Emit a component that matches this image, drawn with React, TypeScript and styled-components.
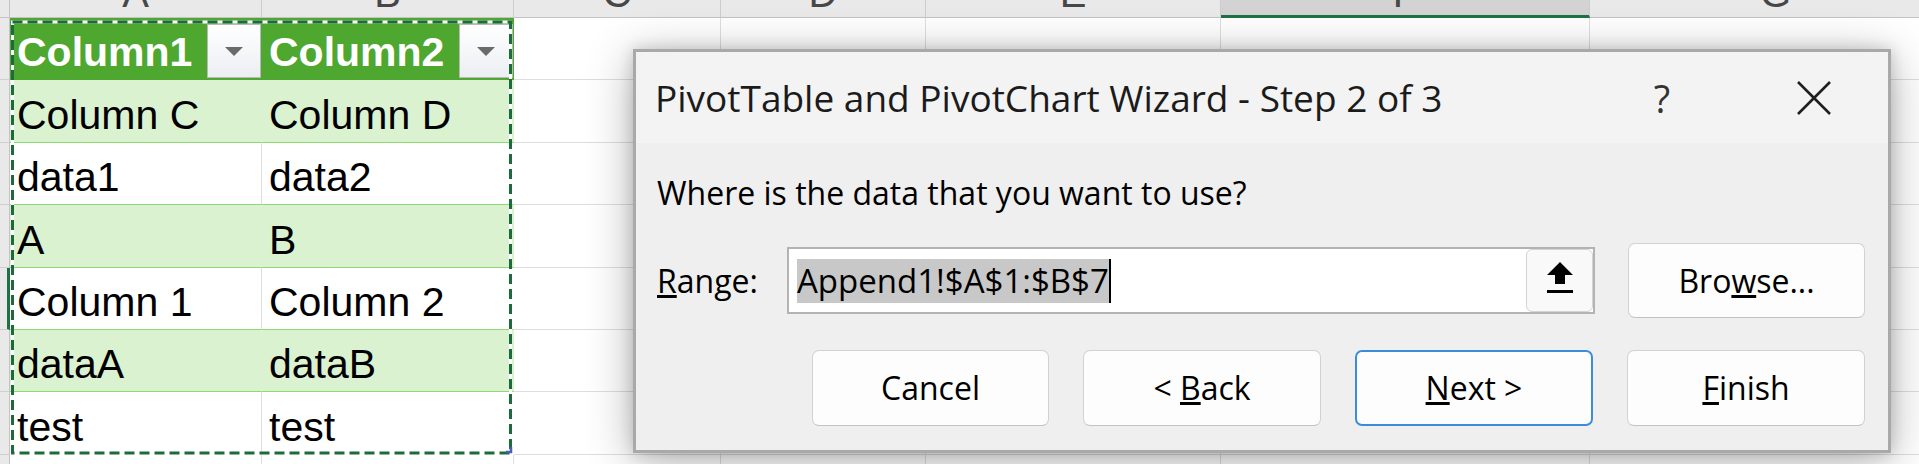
import React from 'react'
import styled, { createGlobalStyle } from 'styled-components'

const GlobalStyle = createGlobalStyle`
  html, body {
    margin: 0;
    padding: 0;
    background: #ffffff;
  }
  body {
    width: 1919px;
    height: 464px;
    overflow: hidden;
  }
`

const COLS = [252, 252, 207, 205, 295, 369, 372]
const ROW_H = 62.4

const Screen = styled.div`
  position: relative;
  width: 1919px;
  height: 464px;
  overflow: hidden;
  background: #ffffff;
`

const Sheet = styled.div`
  display: grid;
  grid-template-columns: 10px ${COLS.map((c) => `${c}px`).join(' ')};
  grid-template-rows: 18px repeat(8, ${ROW_H}px);
  font-family: 'Liberation Sans', Arial, sans-serif;
`

const Corner = styled.div`
  background: #e9e9e9;
  border-right: 1px solid #c4c4c4;
  border-bottom: 1px solid #c4c4c4;
  box-sizing: border-box;
`

// column letters sit mostly above the visible area, only their feet show
const ColHead = styled.div<{ $selected?: boolean }>`
  display: flex;
  justify-content: center;
  align-items: flex-end;
  overflow: hidden;
  box-sizing: border-box;
  background: ${({ $selected }) => ($selected ? '#d3d3d3' : '#e9e9e9')};
  border-right: 1px solid #cdcdcd;
  border-bottom: ${({ $selected }) => ($selected ? '3px solid #1e7145' : '1px solid #c4c4c4')};

  span {
    font-size: 40px;
    line-height: 40px;
    color: #474747;
    margin-bottom: ${({ $selected }) => ($selected ? 2 : 4)}px;
  }
`

const RowHead = styled.div<{ $active?: boolean }>`
  background: #e9e9e9;
  box-sizing: border-box;
  border-right: ${({ $active }) => ($active ? '3px solid #1e7145' : '1px solid #c4c4c4')};
  border-bottom: 1px solid #cfcfcf;
`

const Cell = styled.div`
  box-sizing: border-box;
  border-right: 1px solid #dedede;
  border-bottom: 1px solid #dedede;
`

const TableBlock = styled.div`
  grid-column: 2 / span 2;
  grid-row: 2 / span 7;
  position: relative;
  display: grid;
  grid-template-columns: 252px 252px;
  grid-template-rows: repeat(7, ${ROW_H}px);
`

const HeadCell = styled.div`
  display: flex;
  box-sizing: border-box;
  padding-left: 7px;
  background: #4ea72e;
  color: #ffffff;
  font-size: 41px;
  font-weight: 700;
  line-height: 47px;

  > span {
    align-self: flex-end;
    padding-bottom: 4px;
  }
`

const FilterButton = styled.div`
  align-self: flex-start;
  margin: 6px 1px 0 auto;
  width: 54px;
  height: 54px;
  flex-shrink: 0;
  box-sizing: border-box;
  border: 1px solid #b9b9b9;
  background: linear-gradient(#ffffff, #eceef2);
  display: flex;
  align-items: center;
  justify-content: center;
`

const DropCaret = styled.div`
  width: 0;
  height: 0;
  border-left: 9px solid transparent;
  border-right: 9px solid transparent;
  border-top: 9px solid #6a6a6a;
`

const DataCell = styled.div<{ $light: boolean; $divider: boolean; $lineBelow: boolean }>`
  display: flex;
  align-items: flex-end;
  box-sizing: border-box;
  padding: 0 0 3px 7px;
  font-size: 41px;
  line-height: 47px;
  color: #000000;
  background: ${({ $light }) => ($light ? '#daf2d0' : '#ffffff')};
  border-bottom: 1px solid ${({ $lineBelow }) => ($lineBelow ? '#8ed973' : 'transparent')};
  border-right: 1px solid ${({ $divider }) => ($divider ? '#dedede' : 'transparent')};
`

const Ants = styled.svg`
  position: absolute;
  left: 0;
  top: 0;
  pointer-events: none;
`

const Dialog = styled.div`
  position: absolute;
  left: 633px;
  top: 49px;
  width: 1258px;
  height: 404px;
  box-sizing: border-box;
  border: 3px solid #a9a9a9;
  background: #efefef;
  box-shadow: 0 8px 44px rgba(0, 0, 0, 0.3), 0 0 14px rgba(0, 0, 0, 0.16);
  display: flex;
  flex-direction: column;
  font-family: 'Open Sans', 'Noto Sans', sans-serif;
  color: #000000;
`

const TitleBar = styled.div`
  height: 91px;
  flex-shrink: 0;
  display: flex;
  align-items: center;
  padding: 0 28px 0 19px;
  background: #f3f3f3;
`

const Title = styled.div`
  flex: 1;
  font-size: 37px;
  line-height: 49px;
  color: #1b1b1b;
  white-space: nowrap;
`

const TitleButton = styled.div<{ $gap?: number }>`
  width: 92px;
  height: 60px;
  margin-left: ${({ $gap }) => $gap ?? 0}px;
  display: flex;
  align-items: center;
  justify-content: center;
  font-size: 38px;
  color: #333333;
`

const Body = styled.div`
  flex: 1;
  display: flex;
  flex-direction: column;
  padding: 28px 23px 24px 21px;
  font-size: 32px;
`

const Prompt = styled.div`
  height: 44px;
  line-height: 44px;
`

const RangeRow = styled.div`
  margin-top: 28px;
  height: 75px;
  display: flex;
  align-items: center;
`

const RangeLabel = styled.div`
  width: 130px;
  line-height: 44px;
  flex-shrink: 0;
`

const RangeInput = styled.div`
  flex: 1;
  height: 67px;
  box-sizing: border-box;
  border: 2px solid #b3b3b3;
  background: #ffffff;
  display: flex;
  align-items: center;
  padding: 0 0 0 8px;
`

const Selected = styled.span`
  background: #c8c8c8;
  font-size: 33px;
  line-height: 44px;
  color: #000000;
`

const TextCaret = styled.span`
  width: 2px;
  height: 44px;
  background: #000000;
`

const CollapseButton = styled.div`
  margin-left: auto;
  width: 67px;
  height: 63px;
  box-sizing: border-box;
  border: 1px solid #d4d4d4;
  border-radius: 6px;
  background: #f9f9f9;
  display: flex;
  align-items: center;
  justify-content: center;
  padding-bottom: 6px;
`

const Button = styled.div<{ $default?: boolean; $height?: number; $width?: number }>`
  width: ${({ $width }) => $width ?? 238}px;
  height: ${({ $height }) => $height ?? 76}px;
  flex-shrink: 0;
  box-sizing: border-box;
  border: ${({ $default }) => ($default ? '2px solid #3b8ddb' : '1px solid #d2d2d2')};
  border-bottom-color: ${({ $default }) => ($default ? '#3b8ddb' : '#c3c3c3')};
  border-radius: 7px;
  background: #fdfdfd;
  display: flex;
  align-items: center;
  justify-content: center;
  line-height: 44px;
  color: #000000;
`

const BrowseButton = styled(Button)`
  margin-left: 33px;
`

const ButtonRow = styled.div`
  margin-top: 32px;
  display: flex;
  justify-content: flex-end;
  gap: 34px;
`

const tableRows = [
  ['Column1', 'Column2'],
  ['Column C', 'Column D'],
  ['data1', 'data2'],
  ['A', 'B'],
  ['Column 1', 'Column 2'],
  ['dataA', 'dataB'],
  ['test', 'test'],
]

const letters = ['A', 'B', 'C', 'D', 'E', 'F', 'G']

const App: React.FC = () => {
  return (
    <Screen>
      <GlobalStyle />
      <Sheet>
        <Corner />
        {letters.map((l) => (
          <ColHead key={l} $selected={l === 'F'}>
            <span>{l}</span>
          </ColHead>
        ))}
        <TableBlock>
          {tableRows.map((row, r) =>
            row.map((text, c) =>
              r === 0 ? (
                <HeadCell key={`${r}-${c}`}>
                  <span>{text}</span>
                  <FilterButton>
                    <DropCaret />
                  </FilterButton>
                </HeadCell>
              ) : (
                <DataCell
                  key={`${r}-${c}`}
                  $light={r % 2 === 1}
                  $divider={r % 2 === 0 && c === 0}
                  $lineBelow={r < 6}
                >
                  {text}
                </DataCell>
              )
            )
          )}
          {/* copy marquee around the table */}
          <Ants width="504" height="437" viewBox="0 0 504 437">
            <rect x="2.5" y="4" width="498" height="431" fill="none" stroke="#ffffff" strokeWidth="3" />
            <rect
              x="2.5"
              y="4"
              width="498"
              height="431"
              fill="none"
              stroke="#1d6b3c"
              strokeWidth="3"
              strokeDasharray="10 5"
            />
            <path d="M496 434 L501 434 L501 429" fill="none" stroke="#4a5cc0" strokeWidth="2.5" />
          </Ants>
        </TableBlock>
        {Array.from({ length: 8 }).map((_, r) => (
          <React.Fragment key={r}>
            <RowHead $active={r === 4} />
            {r === 7 && (
              <>
                <Cell />
                <Cell />
              </>
            )}
            {[0, 1, 2, 3, 4].map((c) => (
              <Cell key={c} />
            ))}
          </React.Fragment>
        ))}
      </Sheet>

      <Dialog>
        <TitleBar>
          <Title>PivotTable and PivotChart Wizard - Step 2 of 3</Title>
          <TitleButton>?</TitleButton>
          <TitleButton $gap={60}>
            <svg width="36" height="34" viewBox="0 0 36 34">
              <path d="M2 1 L34 33 M34 1 L2 33" stroke="#1f1f1f" strokeWidth="2.6" fill="none" />
            </svg>
          </TitleButton>
        </TitleBar>
        <Body>
          <Prompt>Where is the data that you want to use?</Prompt>
          <RangeRow>
            <RangeLabel>
              <u>R</u>ange:
            </RangeLabel>
            <RangeInput>
              <Selected>Append1!$A$1:$B$7</Selected>
              <TextCaret />
              <CollapseButton>
                <svg width="28" height="32" viewBox="0 0 28 32">
                  <path d="M14 0 L27 13 L19 13 L19 22 L9 22 L9 13 L1 13 Z" fill="#000000" />
                  <rect x="1" y="28" width="26" height="3" fill="#000000" />
                </svg>
              </CollapseButton>
            </RangeInput>
            <BrowseButton $width={237} $height={75}>
              Bro<u>w</u>se...
            </BrowseButton>
          </RangeRow>
          <ButtonRow>
            <Button $width={237}>Cancel</Button>
            <Button>
              &lt;&nbsp;<u>B</u>ack
            </Button>
            <Button $default>
              <u>N</u>ext &gt;
            </Button>
            <Button $width={238}>
              <u>F</u>inish
            </Button>
          </ButtonRow>
        </Body>
      </Dialog>
    </Screen>
  )
}

export default App
